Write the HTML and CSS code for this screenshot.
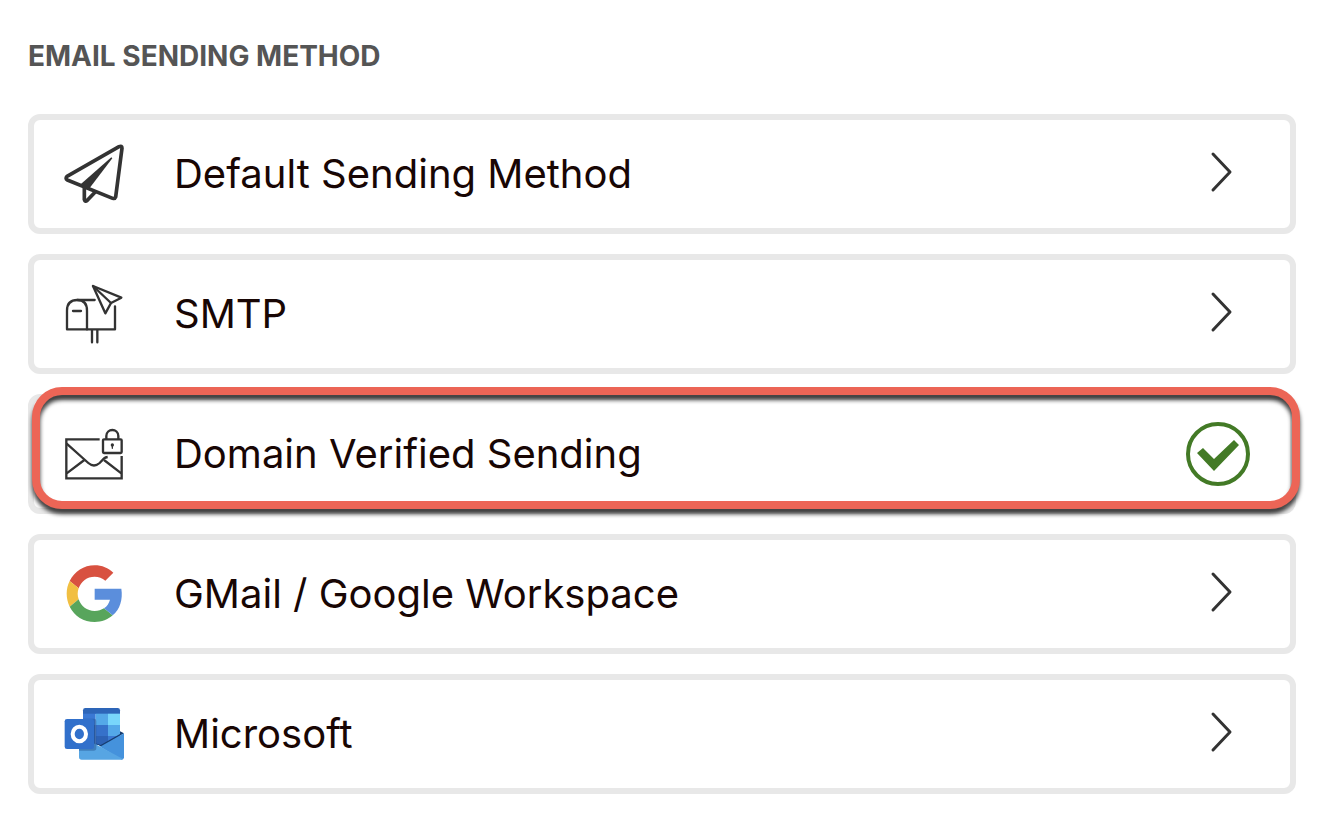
FILE: index.html
```
<!DOCTYPE html>
<html lang="en">
<head>
    <meta charset="UTF-8">
    <meta name="viewport" content="width=device-width, initial-scale=1.0">
    <title>Email Sending Method</title>
    <link rel="stylesheet" href="styles.css">
</head>
<body>
    <main class="settings">
        <h1>EMAIL SENDING METHOD</h1>

        <div class="methods">
            <button type="button" class="method">
                <svg class="icon line" viewBox="42 42 180 180" aria-hidden="true">
                    <g stroke-width="11">
                        <path d="M51 139 L207 50 Q216 46 216 55 L197 201 Q195 207 188 205 L52 150 Q45 145 51 139Z"/>
                        <path d="M103 172 V209 Q105 217 112 211 L135 187"/>
                    </g>
                    <path class="solid" d="M184 82 L187 85 L115 179 L92 163Z"/>
                </svg>
                <span class="label">Default Sending Method</span>
                <svg class="state line" viewBox="0 0 64 64" aria-hidden="true"><path stroke-width="3" d="M27 12 L44 30 L27 48"/></svg>
            </button>

            <button type="button" class="method">
                <svg class="icon line" viewBox="42 42 180 180" aria-hidden="true">
                    <g stroke-width="7">
                        <path d="M134 90 H82 C62 90 51 102 51 122 V178 H195 V109"/>
                        <path d="M82 90 C102 90 111 103 111 122 V178"/>
                        <path d="M69 123 H93 M126 181 V217 M142 181 V217"/>
                        <path d="M129 48 L214 83 L183 99 L166 130Z"/>
                        <path d="M129 48 L183 99"/>
                    </g>
                </svg>
                <span class="label">SMTP</span>
                <svg class="state line" viewBox="0 0 64 64" aria-hidden="true"><path stroke-width="3" d="M27 12 L44 30 L27 48"/></svg>
            </button>

            <button type="button" class="method selected" aria-pressed="true">
                <svg class="icon line" viewBox="42 42 180 180" aria-hidden="true">
                    <g class="square" stroke-width="7">
                        <path d="M149 88 H49 V205 H215 V138"/>
                        <path d="M50 101 L115 159 Q132 174 149 159 L162 145 Q166 142 173 141"/>
                        <path d="M50 190 L103 150 M162 150 L214 190"/>
                        <rect x="159" y="88" width="56" height="41" rx="3"/>
                        <path d="M169 88 V78 C169 54 205 54 205 78 V88"/>
                    </g>
                    <circle class="solid" cx="187" cy="105" r="5"/>
                    <path stroke-width="4" d="M187 105 V115"/>
                </svg>
                <span class="label">Domain Verified Sending</span>
                <svg class="state check" viewBox="0 0 64 64" aria-hidden="true">
                    <circle cx="32" cy="32" r="30"/>
                    <path d="M11 31 L17 26 L28 37 L48 18 L53 23 L28 49Z"/>
                </svg>
            </button>

            <button type="button" class="method">
                <svg class="icon" viewBox="42 42 180 180" aria-hidden="true">
                    <path fill="#d85140" d="M59 93 C74 64 101 46 134 46 C156 46 175 54 190 68 L166 92 C157 84 146 80 134 80 C111 80 93 94 86 115Z"/>
                    <path fill="#f1bf42" d="M59 93 C47 116 47 145 59 170 L86 148 C82 137 82 126 86 115Z"/>
                    <path fill="#58a55c" d="M59 170 C73 198 101 216 134 216 C155 216 174 209 188 196 L162 175 C154 180 145 183 134 183 C111 183 93 169 86 148Z"/>
                    <path fill="#5b8edc" d="M134 116 H214 C219 148 210 178 188 196 L162 175 C171 169 177 160 180 149 H134Z"/>
                </svg>
                <span class="label">GMail / Google Workspace</span>
                <svg class="state line" viewBox="0 0 64 64" aria-hidden="true"><path stroke-width="3" d="M27 12 L44 30 L27 48"/></svg>
            </button>

            <button type="button" class="method">
                <svg class="icon" viewBox="42 42 180 180" aria-hidden="true">
                    <!-- calendar tiles -->
                    <path fill="#2d65b8" d="M99 61 Q99 54 106 54 H203 Q210 54 210 61 V72 H99Z"/>
                    <path fill="#3a78d4" d="M99 71 H137 V105 H99Z"/>
                    <path fill="#54a8e8" d="M137 71 H174 V105 H137Z"/>
                    <path fill="#78d6fb" d="M174 71 H210 V105 H174Z"/>
                    <path fill="#2b5fae" d="M99 105 H137 V165 H99Z"/>
                    <path fill="#3671ca" d="M137 105 H174 V138 H137Z"/>
                    <path fill="#54a8e8" d="M174 105 H210 V138 H174Z"/>
                    <path fill="#2d62b5" d="M137 138 H174 V165 H137Z"/>
                    <path fill="#3b79d2" d="M174 138 H210 V160 H174Z"/>
                    <!-- envelope -->
                    <path fill="#183d70" d="M210 124 L222 130 L155 171 L136 160 L152 165 L210 132Z"/>
                    <path fill="#4592dc" d="M222 130 V202 Q222 209 215 209 L150 170Z"/>
                    <path fill="#57a5e3" d="M87 142 L137 163 L219 207 Q217 209 214 209 H95 Q87 209 87 201Z"/>
                    <path fill="#244f8c" opacity="0.45" d="M99 86 H132 Q139 86 139 93 V174 Q139 182 131 182 H87 V177 H99Z"/>
                    <!-- front tile -->
                    <rect fill="#3170cb" x="44" y="87" width="88" height="90" rx="7"/>
                    <ellipse cx="88" cy="132" rx="20" ry="22" fill="none" stroke="#fff" stroke-width="12"/>
                </svg>
                <span class="label">Microsoft</span>
                <svg class="state line" viewBox="0 0 64 64" aria-hidden="true"><path stroke-width="3" d="M27 12 L44 30 L27 48"/></svg>
            </button>
        </div>
    </main>
</body>
</html>
```
FILE: styles.css
```
* {
    box-sizing: border-box;
}

body {
    margin: 0;
    background: #fff;
    font-family: Inter, "Liberation Sans", sans-serif;
}

.settings {
    padding: 36px 34px 46px 28px;
}

h1 {
    margin: 0 0 38px;
    font-size: 28px;
    font-weight: 700;
    line-height: 40px;
    color: #555;
}

.methods {
    display: flex;
    flex-direction: column;
    gap: 20px;
}

.method {
    position: relative;
    display: flex;
    align-items: center;
    gap: 50px;
    width: 100%;
    min-height: 120px;
    padding: 0 40px 0 30px;
    border: 6px solid #e8e8e8;
    border-radius: 12px;
    background: #fff;
    color: #180604;
    font-family: inherit;
    font-size: 40px;
    line-height: 48px;
    text-align: left;
    cursor: pointer;
}

.label {
    flex: 1;
}

.icon {
    flex: none;
    width: 60px;
    height: 60px;
    overflow: visible;
}

.state {
    flex: none;
    width: 64px;
    height: 64px;
}

.line {
    fill: none;
    stroke: #333;
    stroke-linecap: round;
    stroke-linejoin: round;
}

.line .square {
    stroke-linecap: butt;
    stroke-linejoin: miter;
}

.line .solid {
    fill: #333;
    stroke: none;
}

.check circle {
    fill: none;
    stroke: #437a26;
    stroke-width: 4;
}

.check path {
    fill: #437a26;
}

/* callout ring around the chosen method */
.selected::after {
    content: "";
    position: absolute;
    top: -13px;
    right: -10px;
    bottom: -1px;
    left: -2px;
    border: 8px solid #ec6556;
    border-radius: 30px;
    filter: drop-shadow(0 5px 2px rgba(0, 0, 0, 0.75));
    pointer-events: none;
}
```
